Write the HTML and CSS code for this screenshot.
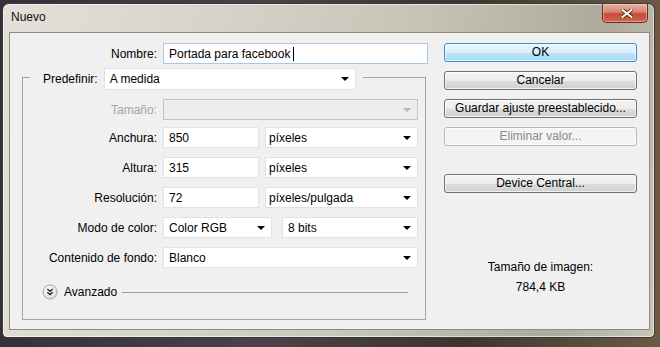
FILE: index.html
```html
<!DOCTYPE html>
<html lang="es">

<head>
    <meta charset="UTF-8">
    <meta name="viewport" content="width=device-width, initial-scale=1.0">
    <title>Nuevo</title>
    <link rel="stylesheet" href="styles.css">
</head>

<body>
    <div class="window">
        <div class="titlebar">
            <span class="title">Nuevo</span>
            <div class="close">
                <svg width="12" height="9" viewBox="0 0 12 9">
                    <path d="M1.5 1 L10.5 8 M10.5 1 L1.5 8" stroke="#4a1d14" stroke-width="3.6" stroke-linecap="square" />
                    <path d="M1.5 1 L10.5 8 M10.5 1 L1.5 8" stroke="#fff" stroke-width="2" stroke-linecap="square" />
                </svg>
            </div>
        </div>
        <div class="client">
            <div class="form">
                <div class="row nameRow">
                    <span class="label">Nombre:</span>
                    <div class="field focused">Portada para facebook <span class="caret"></span></div>
                </div>
                <fieldset class="group">
                    <legend class="preset">
                        <div class="presetInner">
                            <span class="label">Predefinir:</span>
                            <div class="select presetSelect">A medida<i class="arrow"></i></div>
                        </div>
                    </legend>
                    <div class="rows">
                        <div class="row first">
                            <span class="label disabled">Tamaño:</span>
                            <div class="select off"><i class="arrow"></i></div>
                        </div>
                        <div class="row">
                            <span class="label">Anchura:</span>
                            <div class="pair">
                                <div class="field num">850</div>
                                <div class="select unit">píxeles<i class="arrow"></i></div>
                            </div>
                        </div>
                        <div class="row">
                            <span class="label">Altura:</span>
                            <div class="pair">
                                <div class="field num">315</div>
                                <div class="select unit">píxeles<i class="arrow"></i></div>
                            </div>
                        </div>
                        <div class="row">
                            <span class="label">Resolución:</span>
                            <div class="pair">
                                <div class="field num">72</div>
                                <div class="select unit">píxeles/pulgada<i class="arrow"></i></div>
                            </div>
                        </div>
                        <div class="row">
                            <span class="label">Modo de color:</span>
                            <div class="pair wideGap">
                                <div class="select mode">Color RGB<i class="arrow"></i></div>
                                <div class="select unit">8 bits<i class="arrow"></i></div>
                            </div>
                        </div>
                        <div class="row">
                            <span class="label">Contenido de fondo:</span>
                            <div class="select">Blanco<i class="arrow"></i></div>
                        </div>
                    </div>
                    <div class="advanced">
                        <svg class="toggle" width="16" height="16" viewBox="0 0 16 16">
                            <defs>
                                <radialGradient id="knob" cx="0.4" cy="0.35" r="0.7">
                                    <stop offset="0" stop-color="#ffffff" />
                                    <stop offset="1" stop-color="#dcdcdc" />
                                </radialGradient>
                            </defs>
                            <circle cx="8" cy="8" r="7" fill="url(#knob)" stroke="#a3a3a3" />
                            <path d="M5.3 5 L8 7.3 L10.7 5 M5.3 8.3 L8 10.6 L10.7 8.3" fill="none" stroke="#222" stroke-width="1.3" />
                        </svg>
                        <span>Avanzado</span>
                        <div class="rule"></div>
                    </div>
                </fieldset>
            </div>
            <div class="side">
                <div class="btn default">OK</div>
                <div class="btn">Cancelar</div>
                <div class="btn">Guardar ajuste preestablecido...</div>
                <div class="btn off">Eliminar valor...</div>
                <div class="btn central">Device Central...</div>
                <div class="sizeInfo">
                    <div>Tamaño de imagen:</div>
                    <div>784,4 KB</div>
                </div>
            </div>
        </div>
    </div>
</body>

</html>
```

FILE: styles.css
```css
* {
    margin: 0;
    padding: 0;
    box-sizing: border-box;
}

body {
    width: 660px;
    height: 347px;
    overflow: hidden;
    font-family: "Liberation Sans", Arial, sans-serif;
    font-size: 12px;
    color: #000;
    background: linear-gradient(90deg, #35303a 0%, #4a4248 40%, #3c3530 70%, #6b5a44 100%);
}

.window {
    width: 653px;
    height: 335px;
    margin: 3px 0 0 2px;
    padding: 0 4px 7px 6px;
    border: 1px solid #3b3a36;
    border-radius: 7px 7px 5px 5px;
    background: linear-gradient(100deg, #e2e0d8 0%, #d6d4ca 30%, #c6c3b6 60%, #aeaa9b 85%, #c9c5b6 100%);
    box-shadow: inset 0 0 0 1px rgba(255, 255, 255, 0.55);
}

.titlebar {
    height: 28px;
    display: flex;
    justify-content: space-between;
    align-items: flex-start;
}

.title {
    padding: 6px 0 0 2px;
    line-height: 15px;
    color: #111;
}

.close {
    width: 46px;
    height: 19px;
    margin-right: 2px;
    display: flex;
    align-items: center;
    justify-content: center;
    padding-left: 3px;
    border: 1px solid #6a2a1f;
    border-top: none;
    border-radius: 0 0 5px 5px;
    background: linear-gradient(#e9b2a6 0%, #d8826f 45%, #c44a33 55%, #cf6a52 100%);
    box-shadow: inset 0 0 0 1px rgba(255, 220, 210, 0.45);
}

.client {
    height: 298px;
    display: flex;
    gap: 16px;
    padding: 10px 12px 0 12px;
    border: 1px solid #8e8b80;
    background-color: #f0f0f0;
}

.form {
    width: 406px;
}

.row {
    display: grid;
    grid-template-columns: 134px 255px;
    column-gap: 6px;
    align-items: center;
}

.nameRow {
    grid-template-columns: 135px 265px;
}

.label {
    text-align: right;
    white-space: nowrap;
}

.label.disabled {
    color: #a3a3a3;
}

.field,
.select {
    height: 21px;
    display: flex;
    align-items: center;
    padding: 0 6px 0 5px;
    background-color: #fff;
    border: 1px solid #e2e2e2;
    white-space: nowrap;
}

.field.focused {
    height: 21px;
    border-color: #a7c9e3;
}

.caret {
    display: inline-block;
    width: 1px;
    height: 14px;
    margin-left: 3px;
    background-color: #000;
}

.select {
    justify-content: space-between;
}

.arrow {
    width: 0;
    height: 0;
    border-left: 4px solid transparent;
    border-right: 4px solid transparent;
    border-top: 4px solid #000;
}

.select.off {
    background-color: #ededed;
    border-color: #c4c4c4;
    justify-content: flex-end;
}

.select.off .arrow {
    border-top-color: #b4b4b4;
}

.group {
    width: 404px;
    border: 1px solid #a6a6a6;
    padding: 9px 7px 19px 0;
}

.preset {
    margin-left: 7px;
    padding: 4px 7px 0 13px;
}

.presetInner {
    display: flex;
    align-items: center;
    gap: 6px;
}

.presetSelect {
    width: 252px;
    height: 22px;
}

.rows {
    display: flex;
    flex-direction: column;
    gap: 9px;
}

.row.first {
    margin-bottom: -2px;
}

.pair {
    display: flex;
    gap: 6px;
}

.pair.wideGap {
    gap: 10px;
}

.num {
    width: 96px;
}

.unit {
    flex: 1;
    padding-left: 3px;
}

.mode {
    width: 109px;
}

.wideGap .unit {
    padding-left: 5px;
}

.advanced {
    display: flex;
    align-items: center;
    margin: 16px 10px 0 19px;
    height: 16px;
}

.toggle {
    margin-right: 6px;
}

.rule {
    flex: 1;
    height: 1px;
    margin-left: 5px;
    background-color: #9c9c9c;
}

.side {
    width: 193px;
    display: flex;
    flex-direction: column;
    gap: 9px;
}

.btn {
    height: 19px;
    line-height: 17px;
    text-align: center;
    border: 1px solid #707070;
    border-radius: 3px;
    background: linear-gradient(#f4f4f4 0%, #ececec 50%, #dedede 52%, #d0d0d0 100%);
    box-shadow: inset 0 0 0 1px rgba(255, 255, 255, 0.7);
}

.btn.default {
    border-color: #3c8ec8;
    background: linear-gradient(#eaf6fd 0%, #d9effb 50%, #bde3f7 52%, #a7d9f4 100%);
}

.btn.off {
    color: #8a8a8a;
    border-color: #b5b8ba;
    background: #f4f4f4;
}

.btn.central {
    margin-top: 19px;
}

.sizeInfo {
    margin-top: 55px;
    text-align: center;
    line-height: 20px;
}
```
